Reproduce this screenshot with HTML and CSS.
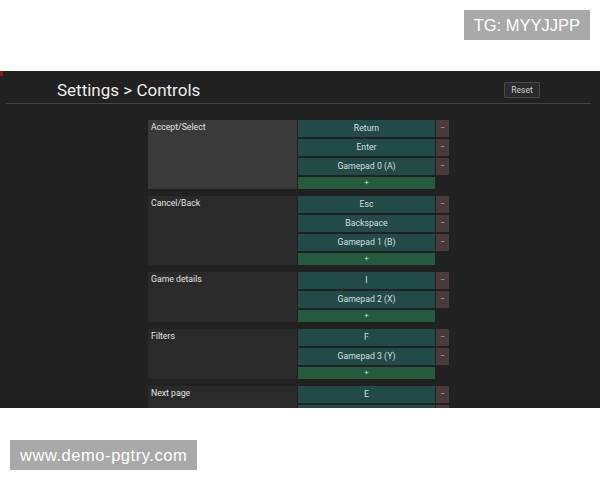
FILE: index.html
```html
<!DOCTYPE html>
<html lang="en">
<head>
<meta charset="UTF-8">
<title>Settings - Controls</title>
<link rel="stylesheet" href="styles.css">
</head>
<body>

<div class="top-strip">
    <div class="tag">TG: MYYJJPP</div>
</div>

<div class="app">
    <span class="corner-mark"></span>
    <div class="header">
        <h1 class="title">Settings &gt; Controls</h1>
        <button class="reset-btn">Reset</button>
    </div>

    <div class="binds">
        <div class="group">
            <div class="action active">Accept/Select</div>
            <div class="keys">
                <div class="key"><span class="key-name">Return</span><span class="remove">&minus;</span></div>
                <div class="key"><span class="key-name">Enter</span><span class="remove">&minus;</span></div>
                <div class="key"><span class="key-name">Gamepad 0 (A)</span><span class="remove">&minus;</span></div>
                <div class="add">+</div>
            </div>
        </div>

        <div class="group">
            <div class="action">Cancel/Back</div>
            <div class="keys">
                <div class="key"><span class="key-name">Esc</span><span class="remove">&minus;</span></div>
                <div class="key"><span class="key-name">Backspace</span><span class="remove">&minus;</span></div>
                <div class="key"><span class="key-name">Gamepad 1 (B)</span><span class="remove">&minus;</span></div>
                <div class="add">+</div>
            </div>
        </div>

        <div class="group">
            <div class="action">Game details</div>
            <div class="keys">
                <div class="key"><span class="key-name">I</span><span class="remove">&minus;</span></div>
                <div class="key"><span class="key-name">Gamepad 2 (X)</span><span class="remove">&minus;</span></div>
                <div class="add">+</div>
            </div>
        </div>

        <div class="group">
            <div class="action">Filters</div>
            <div class="keys">
                <div class="key"><span class="key-name">F</span><span class="remove">&minus;</span></div>
                <div class="key"><span class="key-name">Gamepad 3 (Y)</span><span class="remove">&minus;</span></div>
                <div class="add">+</div>
            </div>
        </div>

        <div class="group">
            <div class="action">Next page</div>
            <div class="keys">
                <div class="key"><span class="key-name">E</span><span class="remove">&minus;</span></div>
                <div class="key"><span class="key-name"></span><span class="remove"></span></div>
            </div>
        </div>
    </div>
</div>

<div class="bottom-strip">
    <div class="tag tag-site">www.demo-pgtry.com</div>
</div>

</body>
</html>
```

FILE: styles.css
```css
html, body {
    margin: 0;
    padding: 0;
    background-color: #fff;
    font-family: Roboto, "Liberation Sans", sans-serif;
}

.top-strip {
    height: 71px;
    box-sizing: border-box;
    padding: 10px 10px 0 0;
    display: flex;
    justify-content: flex-end;
    align-items: flex-start;
}

.bottom-strip {
    padding: 32px 0 0 10px;
    display: flex;
}

.tag {
    background-color: #a9a9a9;
    color: #fff;
    font-family: "Liberation Sans", Arial, sans-serif;
    font-size: 16.5px;
    line-height: 30px;
    height: 30px;
    padding: 0 10px;
}

.tag-site {
    letter-spacing: 0.55px;
}

.app {
    position: relative;
    height: 337px;
    overflow: hidden;
    background-color: #212121;
    color: #dcdcdc;
}

.corner-mark {
    position: absolute;
    top: 0;
    left: 0;
    width: 3px;
    height: 5px;
    background-color: #8a1a1a;
}

.header {
    margin: 0 9px 0 6px;
    height: 33px;
    box-sizing: border-box;
    padding: 6px 51px 0 51px;
    display: flex;
    align-items: center;
    justify-content: space-between;
    border-bottom: 1px solid #444;
}

.title {
    margin: 0;
    font-size: 17px;
    font-weight: normal;
    line-height: 20px;
    color: #ececec;
}

.reset-btn {
    width: 36px;
    height: 16px;
    padding: 0;
    background-color: #2b2b2b;
    border: 1px solid #4a4a4a;
    border-radius: 1px;
    color: #d0d0d0;
    font-family: Roboto, sans-serif;
    font-size: 8.5px;
}

.binds {
    width: 301px;
    margin: 16px 0 0 148px;
    display: flex;
    flex-direction: column;
    gap: 7px;
}

.group {
    display: flex;
    gap: 1px;
}

.action {
    width: 149px;
    box-sizing: border-box;
    padding: 2px 3px;
    background-color: #2a2a2a;
    font-size: 8.7px;
    line-height: 11px;
    color: #e2e2e2;
}

.action.active {
    background-color: #3a3a3a;
}

.keys {
    width: 151px;
    display: flex;
    flex-direction: column;
    gap: 2px;
}

.key {
    display: grid;
    grid-template-columns: 137px 13px;
    gap: 1px;
    height: 17px;
}

.key-name {
    background-color: #224b48;
    text-align: center;
    font-size: 8.7px;
    line-height: 17px;
    color: #d6dede;
}

.remove {
    background-color: #4b3a3d;
    text-align: center;
    font-size: 8px;
    line-height: 15px;
    color: #bfb2b4;
}

.add {
    width: 137px;
    height: 12px;
    background-color: #245a3d;
    text-align: center;
    font-size: 8px;
    line-height: 12px;
    color: #d6e6dc;
}
```
